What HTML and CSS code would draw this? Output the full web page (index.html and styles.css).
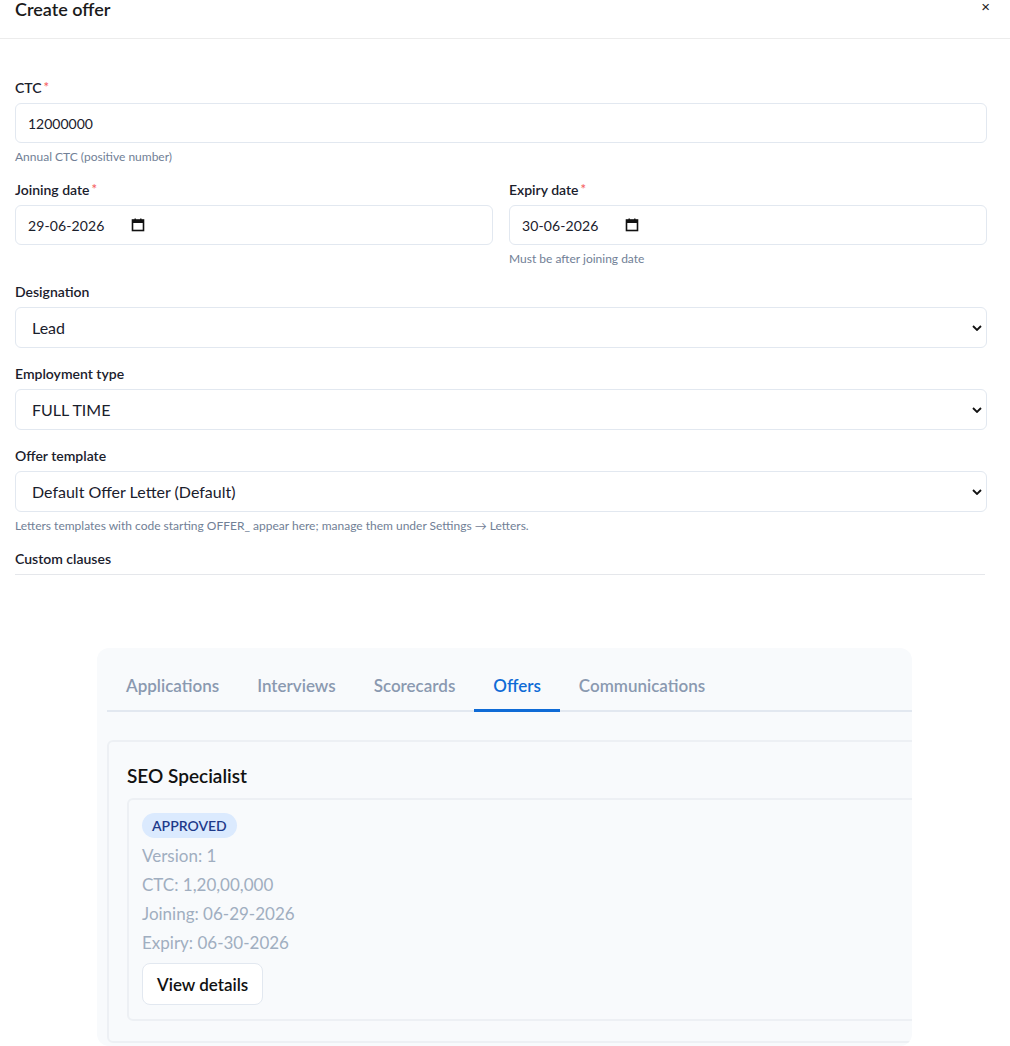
FILE: index.html
```html
<!DOCTYPE html>
<html lang="en">
<head>
    <meta charset="UTF-8">
    <meta name="viewport" content="width=device-width, initial-scale=1.0">
    <title>Create offer</title>
    <link rel="stylesheet" href="styles.css">
</head>
<body>
    <!-- Modal: create offer -->
    <div class="modal">
        <div class="modal-head">
            <h2 class="modal-title">Create offer</h2>
            <button class="close-btn" type="button">&times;</button>
        </div>

        <form class="offer-form">
            <div class="group">
                <label class="lbl">CTC<span class="req">*</span></label>
                <input class="field" type="text" value="12000000">
                <div class="hint">Annual CTC (positive number)</div>
            </div>

            <div class="group row">
                <div>
                    <label class="lbl">Joining date<span class="req">*</span></label>
                    <div class="field date">
                        <span>29-06-2026</span>
                        <svg width="14" height="14" viewBox="0 0 14 14"><rect x="1.5" y="2" width="11" height="10.5" fill="none" stroke="#111" stroke-width="1.6"/><rect x="1.5" y="2" width="11" height="3" fill="#111"/><rect x="3.5" y="0.5" width="1.4" height="2" fill="#111"/><rect x="9.1" y="0.5" width="1.4" height="2" fill="#111"/></svg>
                    </div>
                </div>
                <div>
                    <label class="lbl">Expiry date<span class="req">*</span></label>
                    <div class="field date">
                        <span>30-06-2026</span>
                        <svg width="14" height="14" viewBox="0 0 14 14"><rect x="1.5" y="2" width="11" height="10.5" fill="none" stroke="#111" stroke-width="1.6"/><rect x="1.5" y="2" width="11" height="3" fill="#111"/><rect x="3.5" y="0.5" width="1.4" height="2" fill="#111"/><rect x="9.1" y="0.5" width="1.4" height="2" fill="#111"/></svg>
                    </div>
                    <div class="hint">Must be after joining date</div>
                </div>
            </div>

            <div class="group">
                <label class="lbl">Designation</label>
                <div class="select-wrap">
                    <select class="field sel"><option>Lead</option></select>
                    <svg class="chev" width="10" height="6" viewBox="0 0 10 6"><path d="M1 1l4 4 4-4" fill="none" stroke="#111" stroke-width="1.8"/></svg>
                </div>
            </div>

            <div class="group">
                <label class="lbl">Employment type</label>
                <div class="select-wrap">
                    <select class="field sel"><option>FULL TIME</option></select>
                    <svg class="chev" width="10" height="6" viewBox="0 0 10 6"><path d="M1 1l4 4 4-4" fill="none" stroke="#111" stroke-width="1.8"/></svg>
                </div>
            </div>

            <div class="group">
                <label class="lbl">Offer template</label>
                <div class="select-wrap">
                    <select class="field sel"><option>Default Offer Letter (Default)</option></select>
                    <svg class="chev" width="10" height="6" viewBox="0 0 10 6"><path d="M1 1l4 4 4-4" fill="none" stroke="#111" stroke-width="1.8"/></svg>
                </div>
                <div class="hint">Letters templates with code starting OFFER_ appear here; manage them under Settings → Letters.</div>
            </div>

            <div class="group">
                <label class="lbl">Custom clauses</label>
                <div class="clauses"></div>
            </div>
        </form>
    </div>

    <!-- Candidate panel with tabs -->
    <div class="panel">
        <div class="tabs">
            <div class="tab">Applications</div>
            <div class="tab">Interviews</div>
            <div class="tab">Scorecards</div>
            <div class="tab active">Offers</div>
            <div class="tab">Communications</div>
        </div>

        <div class="offer-card">
            <h3 class="job-title">SEO Specialist</h3>
            <div class="offer-item">
                <span class="badge">APPROVED</span>
                <div class="meta">Version: 1</div>
                <div class="meta">CTC: 1,20,00,000</div>
                <div class="meta">Joining: 06-29-2026</div>
                <div class="meta">Expiry: 06-30-2026</div>
                <button class="btn" type="button">View details</button>
            </div>
        </div>
    </div>
</body>
</html>
```

FILE: styles.css
```css
body {
    margin: 0;
    font-family: Lato, "Noto Sans", sans-serif;
    color: #1a202c;
    background-color: #ffffff;
}
.modal-head {
    height: 38px;
    border-bottom: 1px solid #ececec;
    display: flex;
    justify-content: space-between;
    align-items: flex-start;
    padding: 0 20px 0 15px;
}
.modal-title {
    margin: -1px 0 0 0;
    font-size: 18px;
    line-height: 20px;
    font-weight: 600;
    color: #1a1a1a;
}
.close-btn {
    border: none;
    background: none;
    padding: 0;
    font-size: 15px;
    line-height: 14px;
    color: #222;
    cursor: pointer;
}
.offer-form {
    padding: 39px 23px 0 15px;
}
.group {
    margin-bottom: 16px;
}
.row {
    display: grid;
    grid-template-columns: 1fr 1fr;
    column-gap: 16px;
}
.lbl {
    display: block;
    font-size: 14px;
    line-height: 19px;
    font-weight: 600;
    margin-bottom: 6px;
    color: #1a202c;
}
.req {
    color: #f56565;
    font-size: 13px;
    vertical-align: 1px;
    margin-left: 2px;
}
.field {
    display: block;
    width: 100%;
    height: 40px;
    box-sizing: border-box;
    border: 1px solid #e2e8f0;
    border-radius: 6px;
    background-color: #ffffff;
    padding: 0 12px;
    font-family: inherit;
    font-size: 14px;
    color: #1a202c;
}
.date {
    display: flex;
    align-items: center;
    gap: 27px;
}
.date span {
    letter-spacing: 0.1px;
}
.select-wrap {
    position: relative;
}
.sel {
    appearance: none;
    height: 41px;
    padding-left: 16px;
    font-size: 16px;
}
.chev {
    position: absolute;
    right: 5px;
    top: 18px;
}
.hint {
    margin-top: 6px;
    font-size: 12px;
    line-height: 15px;
    color: #718096;
}
.clauses {
    border-top: 1px solid #e5e7eb;
    margin-right: 2px;
}
.panel {
    margin: 73px 0 0 97px;
    width: 815px;
    height: 398px;
    box-sizing: border-box;
    padding: 14px 0 0 10px;
    background-color: #f8fafc;
    border-radius: 12px;
    overflow: hidden;
}
.tabs {
    display: flex;
    border-bottom: 2px solid #e2e8f0;
}
.tab {
    padding: 12px 19px 11px 19px;
    font-size: 17px;
    line-height: 24px;
    font-weight: 600;
    color: #8a99b0;
    border-bottom: 3px solid transparent;
    margin-bottom: -2px;
}
.tab.active {
    color: #0f6bd6;
    border-bottom-color: #0f6bd6;
}
.offer-card {
    margin-top: 28px;
    width: 860px;
    border: 2px solid #edf0f4;
    border-radius: 6px;
    padding: 20px 18px 20px 18px;
}
.job-title {
    margin: 0 0 9px 0;
    font-size: 19px;
    line-height: 27px;
    font-weight: 600;
    color: #111111;
}
.offer-item {
    border: 2px solid #edf0f4;
    border-radius: 6px;
    padding: 13px 13px 14px 13px;
}
.badge {
    display: inline-block;
    height: 25px;
    line-height: 25px;
    padding: 0 10px;
    border-radius: 13px;
    background-color: #dbeafe;
    color: #1e3a8a;
    font-size: 14px;
    font-weight: 600;
    vertical-align: top;
    margin-bottom: 3px;
}
.meta {
    font-size: 17px;
    line-height: 29px;
    color: #a0aec0;
}
.btn {
    margin-top: 6px;
    height: 42px;
    padding: 0 14px;
    border: 1px solid #e2e8f0;
    border-radius: 8px;
    background-color: #ffffff;
    font-family: inherit;
    font-size: 17px;
    font-weight: 600;
    color: #111111;
    cursor: pointer;
}
```
